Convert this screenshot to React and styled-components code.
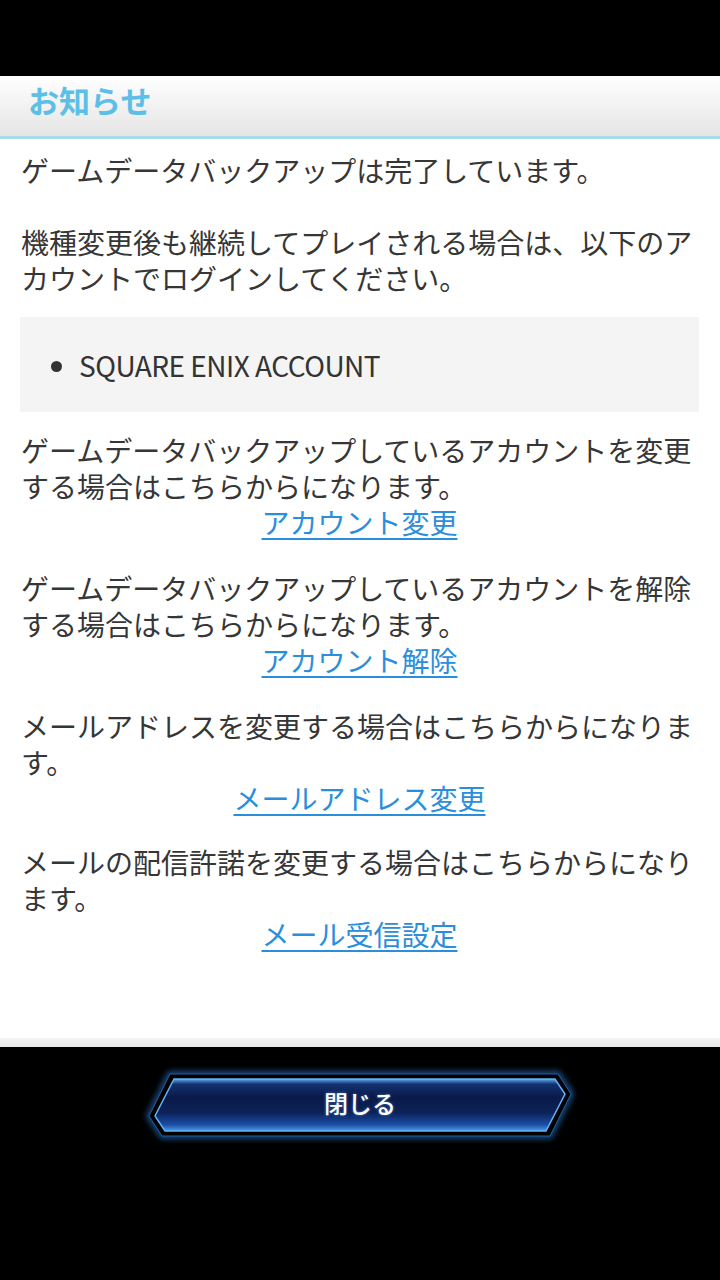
import React from "react";
import styled, { createGlobalStyle } from "styled-components";

const GlobalStyle = createGlobalStyle`
  html, body { margin: 0; padding: 0; background: #000; }
  body { font-family: "Noto Sans CJK JP", "Noto Sans", sans-serif; }
  * { box-sizing: border-box; }
`;

const Screen = styled.div`
  width: 720px;
  height: 1280px;
  background: #000;
  display: flex;
  flex-direction: column;
  overflow: hidden;
`;

const TopBar = styled.div`
  height: 76px;
  flex: none;
  background: #000;
`;

const Panel = styled.div`
  background: #fff;
  display: flex;
  flex-direction: column;
  flex: none;
`;

const Header = styled.div`
  height: 63px;
  background: linear-gradient(to bottom, #ffffff 0%, #f3f3f3 45%, #e5e5e5 100%);
  border-bottom: 3px solid #a7dce9;
  display: flex;
  align-items: center;
  padding: 0 0 14px 28px;
`;

const Title = styled.h1`
  margin: 0;
  font-size: 31px;
  font-weight: 700;
  color: #5cbfe7;
  letter-spacing: 0;
  line-height: 1;
`;

const Body = styled.div`
  padding: 13px 22px 0 21px;
  height: 899px;
  display: flex;
  flex-direction: column;
  color: #363636;
  font-size: 28px;
  line-height: 36px;
`;

const Para = styled.p`
  margin: ${(p) => p.$top || 0}px 0 0;
`;

const AccountBox = styled.ul`
  margin: 21px -1px 0;
  background: #f4f4f4;
  height: 95px;
  padding: 0 0 0 59px;
  display: flex;
  flex-direction: column;
  justify-content: center;
  list-style: disc;
`;

const AccountItem = styled.li`
  font-size: 28px;
  line-height: 36px;
  color: #333;
  letter-spacing: -0.5px;
`;

const LinkLine = styled.div`
  text-align: center;
  height: 36px;
`;

const Link = styled.a`
  display: inline-block;
  height: 36px;
  line-height: 36px;
  color: #2b8edb;
  text-decoration: underline;
  text-underline-offset: 4px;
  text-decoration-thickness: 2px;
  cursor: pointer;
`;

const BottomStrip = styled.div`
  height: 9px;
  background: linear-gradient(to bottom, #f4f4f4 0%, #e8e8e8 100%);
`;

const Footer = styled.div`
  flex: 1;
  display: flex;
  justify-content: center;
  padding-top: 23px;
`;

const CloseButton = styled.button`
  position: relative;
  width: 430px;
  height: 70px;
  border: 0;
  padding: 0;
  background: transparent;
  display: flex;
  align-items: center;
  justify-content: center;
  cursor: pointer;
`;

const ButtonArt = styled.svg`
  position: absolute;
  inset: 0;
  width: 100%;
  height: 100%;
  overflow: visible;
`;

const ButtonLabel = styled.span`
  position: relative;
  color: #fff;
  font-family: "Noto Sans CJK JP", sans-serif;
  font-size: 24px;
  font-weight: 500;
  line-height: 1;
  margin-top: -5px;
  text-shadow: 0 0 3px rgba(120, 180, 255, 0.6);
`;

function ButtonShape() {
  return (
    <ButtonArt viewBox="0 0 430 70" aria-hidden="true">
      <defs>
        <linearGradient id="fillG" x1="0" y1="0" x2="0" y2="1">
          <stop offset="0" stopColor="#5fa9ee" />
          <stop offset="0.1" stopColor="#123272" />
          <stop offset="0.35" stopColor="#0a1a48" />
          <stop offset="0.65" stopColor="#0c2258" />
          <stop offset="0.88" stopColor="#1b4ea6" />
          <stop offset="1" stopColor="#4d9ce8" />
        </linearGradient>
        <filter id="glow" x="-10%" y="-40%" width="120%" height="180%">
          <feGaussianBlur stdDeviation="3" />
        </filter>
      </defs>
      <path
        d="M25 4 L413 4 L426 24 L405 66 L17 66 L4 46 Z"
        fill="none"
        stroke="#2f7fd6"
        strokeWidth="4"
        filter="url(#glow)"
        opacity="0.9"
      />
      <path
        d="M25 4 L413 4 L426 24 L405 66 L17 66 L4 46 Z"
        fill="#000"
        stroke="#1d5fae"
        strokeWidth="1"
      />
      <path
        d="M29 9 L410 9 L420 24 L401 61 L20 61 L10 46 Z"
        fill="url(#fillG)"
        stroke="#63b2f4"
        strokeWidth="1.5"
      />
    </ButtonArt>
  );
}

export default function App() {
  return (
    <>
      <GlobalStyle />
      <Screen>
        <TopBar />
        <Panel>
          <Header>
            <Title>お知らせ</Title>
          </Header>
          <Body>
            <Para>ゲームデータバックアップは完了しています。</Para>
            <Para $top={36}>
              機種変更後も継続してプレイされる場合は、以下のアカウントでログインしてください。
            </Para>
            <AccountBox>
              <AccountItem>SQUARE ENIX ACCOUNT</AccountItem>
            </AccountBox>
            <Para $top={20}>
              ゲームデータバックアップしているアカウントを変更する場合はこちらからになります。
            </Para>
            <LinkLine>
              <Link>アカウント変更</Link>
            </LinkLine>
            <Para $top={30}>
              ゲームデータバックアップしているアカウントを解除する場合はこちらからになります。
            </Para>
            <LinkLine>
              <Link>アカウント解除</Link>
            </LinkLine>
            <Para $top={30}>
              メールアドレスを変更する場合はこちらからになります。
            </Para>
            <LinkLine>
              <Link>メールアドレス変更</Link>
            </LinkLine>
            <Para $top={28}>
              メールの配信許諾を変更する場合はこちらからになります。
            </Para>
            <LinkLine>
              <Link>メール受信設定</Link>
            </LinkLine>
          </Body>
          <BottomStrip />
        </Panel>
        <Footer>
          <CloseButton>
            <ButtonShape />
            <ButtonLabel>閉じる</ButtonLabel>
          </CloseButton>
        </Footer>
      </Screen>
    </>
  );
}
